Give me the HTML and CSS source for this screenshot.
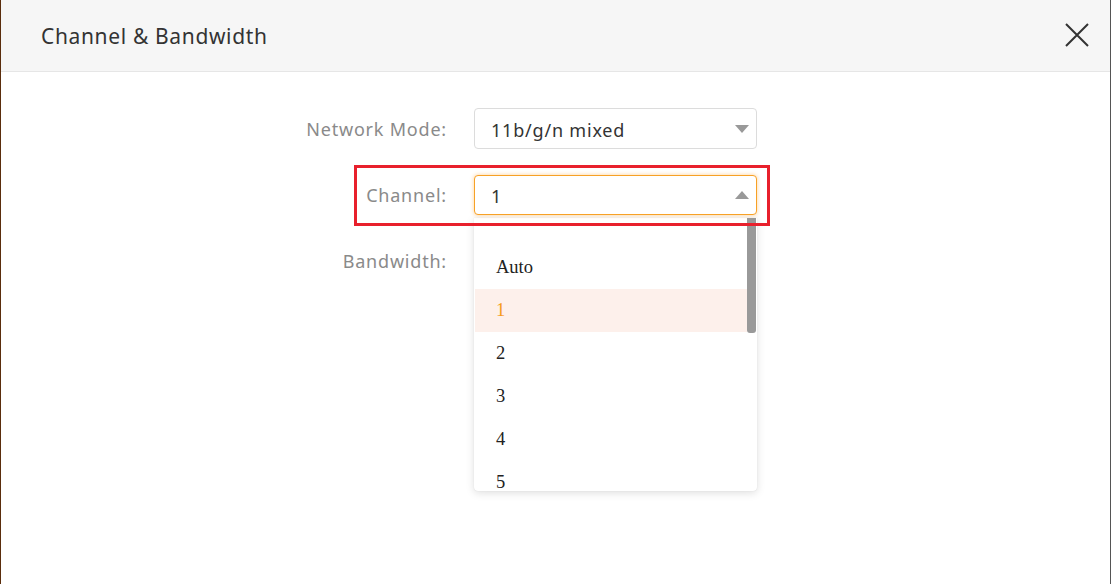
FILE: index.html
```html
<!DOCTYPE html>
<html lang="en">
<head>
<meta charset="utf-8">
<title>Channel &amp; Bandwidth</title>
<link rel="stylesheet" href="styles.css">
</head>
<body>
<div class="dialog">
  <header class="dialog-head">
    <h1 class="dialog-title">Channel &amp; Bandwidth</h1>
    <button class="close-btn" aria-label="Close">
      <svg width="24" height="24" viewBox="0 0 24 24"><path d="M1 1 L23 23 M23 1 L1 23" stroke="#333" stroke-width="2" fill="none"/></svg>
    </button>
  </header>
  <main class="form">
    <div class="row">
      <label class="label">Network Mode:</label>
      <div class="select">
        <span class="value">11b/g/n mixed</span>
        <span class="caret down"></span>
      </div>
    </div>
    <div class="row row-active">
      <div class="marker"></div>
      <label class="label">Channel:</label>
      <div class="select open">
        <span class="value">1</span>
        <span class="caret up"></span>
      </div>
      <div class="dropdown">
        <ul class="options">
          <li>Auto</li>
          <li class="selected">1</li>
          <li>2</li>
          <li>3</li>
          <li>4</li>
          <li>5</li>
        </ul>
        <div class="thumb"></div>
      </div>
    </div>
    <div class="row">
      <label class="label">Bandwidth:</label>
    </div>
  </main>
</div>
</body>
</html>
```
FILE: styles.css
```css
* { box-sizing: border-box; }

html, body {
  margin: 0;
  padding: 0;
  background: #fff;
}

body {
  font-family: "Noto Sans", "Open Sans", sans-serif;
  color: #333;
}

.dialog {
  height: 584px;
  border-left: 1px solid #5a2d0c;
  border-right: 1px solid #555;
  background: #fff;
  overflow: hidden;
}

.dialog-head {
  height: 72px;
  background: #f6f6f6;
  border-bottom: 1px solid #e6e6e6;
  display: flex;
  align-items: center;
  justify-content: space-between;
  padding: 0 21px 0 40px;
}

.dialog-title {
  margin: 0;
  font-size: 21px;
  font-weight: 400;
  color: #333;
  letter-spacing: 0.65px;
}

.close-btn {
  border: 0;
  background: none;
  padding: 0;
  width: 24px;
  height: 24px;
  display: flex;
  margin-top: -1px;
}

.form {
  padding: 36px 0 0 296px;
  display: flex;
  flex-direction: column;
  gap: 25px;
}

.row {
  position: relative;
  height: 41px;
  display: flex;
  align-items: center;
  gap: 27px;
}

.label {
  width: 150px;
  text-align: right;
  font-size: 18px;
  letter-spacing: 0.8px;
  color: #8a8a8a;
  padding-top: 1px;
}

.select {
  width: 283px;
  height: 41px;
  border: 1px solid #dcdcdc;
  border-radius: 4px;
  display: flex;
  align-items: center;
  justify-content: space-between;
  padding: 2px 7px 0 16px;
  font-size: 18px;
  letter-spacing: 0.8px;
  color: #333;
  background: #fff;
}

.select.open {
  height: 40px;
  border-color: #f7a126;
  box-shadow: 0 0 4px rgba(255, 150, 20, 0.45);
  position: relative;
  z-index: 2;
}

.caret {
  width: 0;
  height: 0;
  border-left: 7px solid transparent;
  border-right: 7px solid transparent;
  margin-top: -2px;
}

.caret.down { border-top: 8px solid #999; }
.caret.up { border-bottom: 8px solid #999; }

.marker {
  position: absolute;
  left: 57px;
  top: -9px;
  width: 416px;
  height: 61px;
  border: 3px solid #e8202c;
  z-index: 3;
  pointer-events: none;
}

.dropdown {
  position: absolute;
  left: 177px;
  top: 44px;
  width: 283px;
  height: 273px;
  background: #fff;
  border-radius: 0 0 4px 4px;
  box-shadow: 0 2px 8px rgba(0, 0, 0, 0.13), 0 0 1px rgba(0, 0, 0, 0.15);
  overflow: hidden;
  z-index: 1;
}

.options {
  list-style: none;
  margin: 0;
  padding: 28px 0 0 0;
  font-family: "Liberation Serif", "Times New Roman", serif;
  font-size: 18.5px;
  color: #222;
}

.options li {
  height: 43px;
  line-height: 43px;
  padding-left: 21px;
  margin-right: 10px;
  margin-left: 1px;
}

.options li.selected {
  background: #fdf0eb;
  color: #f59a18;
}

.thumb {
  position: absolute;
  right: 1px;
  top: 0;
  width: 9px;
  height: 115px;
  background: #999;
  border-radius: 0 0 3px 3px;
}
```
